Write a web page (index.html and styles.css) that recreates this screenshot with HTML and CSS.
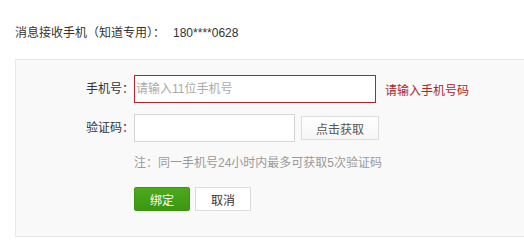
FILE: index.html
```html
<!DOCTYPE html>
<html lang="zh-CN">
<head>
<meta charset="utf-8">
<title>绑定手机</title>
<link rel="stylesheet" href="styles.css">
</head>
<body>
<div class="head">消息接收手机（知道专用）：<span class="phone">180****0628</span></div>
<div class="panel">
  <div class="row">
    <label class="label">手机号：</label>
    <input class="input input-phone input-error" type="text" placeholder="请输入11位手机号">
    <span class="error">请输入手机号码</span>
  </div>
  <div class="row row-code">
    <label class="label">验证码：</label>
    <input class="input input-code" type="text">
    <button class="btn btn-get" type="button">点击获取</button>
  </div>
  <div class="note">注：同一手机号24小时内最多可获取5次验证码</div>
  <div class="actions">
    <button class="btn btn-primary" type="button">绑定</button>
    <button class="btn btn-cancel" type="button">取消</button>
  </div>
</div>
</body>
</html>
```
FILE: styles.css
```css
html, body {
  margin: 0;
  padding: 0;
  background: #fff;
}
body {
  font-family: "Liberation Sans", "Noto Sans CJK SC", sans-serif;
  font-size: 12px;
  color: #333;
}
.head {
  padding: 25px 0 0 15px;
  height: 34px;
  line-height: 16px;
  color: #333;
}
.phone {
  margin-left: 8px;
}
.panel {
  margin-left: 15px;
  height: 161px;
  border: 1px solid #e9e9e9;
  border-right: none;
  background: #f9f9f9;
  padding-top: 15px;
  box-sizing: content-box;
}
.row {
  display: flex;
  align-items: center;
  height: 28px;
}
.row-code {
  margin-top: 11px;
}
.label {
  width: 118px;
  text-align: right;
  flex: none;
  color: #333;
  line-height: 16px;
}
.input {
  box-sizing: border-box;
  height: 28px;
  border: 1px solid #d5d5d5;
  background: #fff;
  padding: 0 0 0 1px;
  font: inherit;
  color: #333;
  outline: none;
  margin: 0;
}
.input::placeholder {
  color: #aaa;
}
.input-phone {
  width: 242px;
}
.input-error {
  border-color: #a8262c;
}
.input-code {
  width: 161px;
}
.error {
  margin-left: 9px;
  color: #a8262c;
}
.btn {
  box-sizing: border-box;
  height: 24px;
  font: inherit;
  padding: 0;
  margin: 0;
  cursor: pointer;
}
.btn-get {
  margin-left: 6px;
  width: 78px;
  border: 1px solid #dcdcdc;
  background: linear-gradient(#ffffff, #f6f6f6);
  color: #555;
}
.note {
  margin-top: 11px;
  padding-left: 118px;
  line-height: 20px;
  color: #999;
}
.actions {
  margin-top: 14px;
  padding-left: 118px;
  display: flex;
  gap: 5px;
}
.btn-primary {
  width: 56px;
  border: 1px solid #3c9410;
  border-radius: 2px;
  background: linear-gradient(#4cab1c, #3b9611);
  color: #fff;
}
.btn-cancel {
  width: 56px;
  border: 1px solid #dcdcdc;
  background: #fff;
  color: #333;
}
```
